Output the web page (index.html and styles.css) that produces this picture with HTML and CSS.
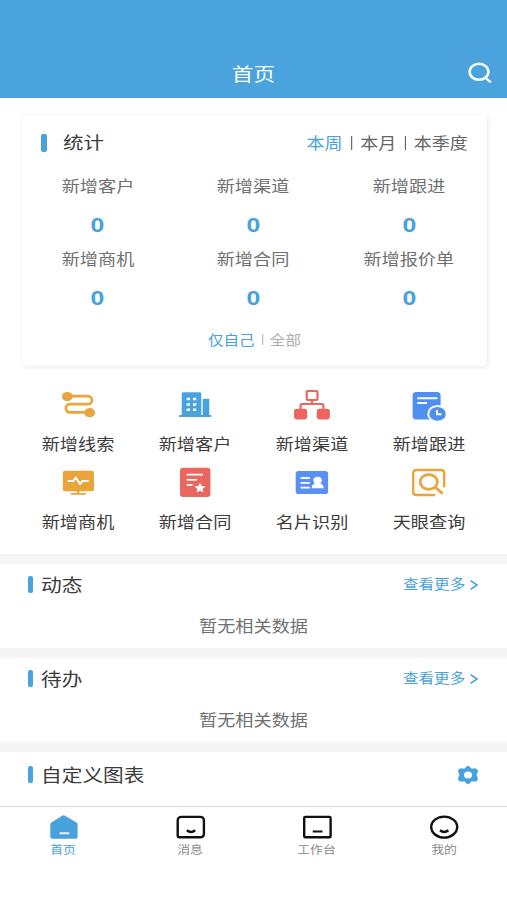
FILE: index.html
```html
<!DOCTYPE html>
<html lang="zh-CN">
<head>
<meta charset="utf-8">
<meta name="viewport" content="width=device-width, initial-scale=1">
<title>首页</title>
<link rel="stylesheet" href="styles.css">
</head>
<body>
<header class="topbar">
  <h1 class="topbar-title wide">首页</h1>
  <svg class="topbar-search" width="28" height="24" viewBox="0 0 28 24" fill="none" stroke="#fff" stroke-width="2.5"><ellipse cx="13" cy="10.8" rx="9.4" ry="8"/><path d="M20.400 17.600l4.400 3.800"/></svg>
</header>

<section class="stats">
  <div class="stats-head">
    <i class="mark"></i>
    <h2 class="stats-title wide from-left">统计</h2>
    <div class="periods wide from-right"><span class="on">本周</span><i></i><span>本月</span><i></i><span>本季度</span></div>
  </div>
  <div class="stats-grid">
    <div class="stat"><span class="wide">新增客户</span><b>0</b></div>
    <div class="stat"><span class="wide">新增渠道</span><b>0</b></div>
    <div class="stat"><span class="wide">新增跟进</span><b>0</b></div>
    <div class="stat"><span class="wide">新增商机</span><b>0</b></div>
    <div class="stat"><span class="wide">新增合同</span><b>0</b></div>
    <div class="stat"><span class="wide">新增报价单</span><b>0</b></div>
  </div>
  <div class="scope wide"><span class="on">仅自己</span><i></i><span>全部</span></div>
</section>

<nav class="actions">
  <a class="action">
    <svg width="40" height="36" viewBox="0 0 40 36"><path d="M10 9.200H30a3.900 3.900 0 0 1 0 7.900H12a4.100 4.100 0 0 0 0 8.300H30" fill="none" stroke="#e9a43c" stroke-width="2.700"/><ellipse cx="9.300" cy="9.600" rx="5.400" ry="4.600" fill="#e9a43c"/><ellipse cx="31.700" cy="25.700" rx="5.400" ry="4.600" fill="#e9a43c"/></svg>
    <span class="wide">新增线索</span>
  </a>
  <a class="action">
    <svg width="40" height="36" viewBox="0 0 40 36"><g fill="#48a2dc"><rect x="6.700" y="5.300" width="19.600" height="24" rx="1.500"/><rect x="27.700" y="11.700" width="6.600" height="17" rx="1"/><rect x="4" y="28" width="32.400" height="1.900" rx=".9"/></g><path d="M11.700 12h3.300M18 12h3.300M11.700 17.400h3.300M18 17.400h3.300M11.700 22.800h3.300M18 22.800h3.300" stroke="#fff" stroke-width="2.500"/></svg>
    <span class="wide">新增客户</span>
  </a>
  <a class="action">
    <svg width="40" height="36" viewBox="0 0 40 36"><g fill="none" stroke="#e9675f" stroke-width="2.200"><rect x="14.700" y="4" width="10.800" height="9" rx="1"/><path d="M20 13v4M8.600 22v-3.500q0-1.500 1.500-1.500h19.800q1.500 0 1.500 1.500V22"/></g><rect x="2" y="21.800" width="13.200" height="10.600" rx="2.800" fill="#e9675f"/><rect x="24.700" y="21.800" width="13.200" height="10.600" rx="2.800" fill="#e9675f"/></svg>
    <span class="wide">新增渠道</span>
  </a>
  <a class="action">
    <svg width="40" height="36" viewBox="0 0 40 36"><rect x="3.600" y="5" width="28" height="27.500" rx="3.500" fill="#508ff0"/><path d="M9 11.300h18.600M9 16h8.200" stroke="#fff" stroke-width="2" stroke-linecap="round"/><ellipse cx="28.500" cy="26.900" rx="9.300" ry="7.900" fill="#508ff0" stroke="#fff" stroke-width="2"/><path d="M28 23v4.200h4.400" fill="none" stroke="#fff" stroke-width="1.900"/></svg>
    <span class="wide">新增跟进</span>
  </a>
  <a class="action">
    <svg width="40" height="36" viewBox="0 0 40 36"><g fill="#e9a43c"><rect x="4.800" y="5.800" width="31.200" height="20.400" rx="2"/><path d="M18.800 26h2.600v2.400h-2.600z"/><rect x="12.600" y="28" width="15.400" height="1.800" rx=".9"/></g><path d="M10.500 16H15.400l2.400-3.400 4.300 6.600 2-3.200h5.800" fill="none" stroke="#fff" stroke-width="1.900" stroke-linecap="round" stroke-linejoin="round"/></svg>
    <span class="wide">新增商机</span>
  </a>
  <a class="action">
    <svg width="40" height="36" viewBox="0 0 40 36"><rect x="5" y="2.800" width="30.400" height="29.200" rx="3" fill="#e9675f"/><path d="M12.400 9.700h14.800M12.400 14.800h9M12.400 19.800h4.600" stroke="#fff" stroke-width="1.800" stroke-linecap="round"/><path d="M25 17.800l1.600 3.100 4 .5-2.900 2.400.7 3.700-3.400-1.700-3.400 1.700.7-3.700-2.900-2.400 4-.5z" fill="#fff"/></svg>
    <span class="wide">新增合同</span>
  </a>
  <a class="action">
    <svg width="40" height="36" viewBox="0 0 40 36"><rect x="3.700" y="6" width="32.400" height="23" rx="2.800" fill="#5b8ff4"/><path d="M8.600 13h9.200M8.600 17.800h9.200M8.600 22.600h9.200" stroke="#fff" stroke-width="1.800"/><path d="M25.600 11.800c2.700 0 4.200 1.500 4.200 3.400 0 1.600-.8 2.500-1.700 3.200 2.200.5 3.500 1.600 3.500 4.900H19.700c0-3.300 1.200-4.400 3.400-4.900-.9-.7-1.700-1.600-1.700-3.200 0-1.900 1.500-3.400 4.200-3.400z" fill="#fff"/></svg>
    <span class="wide">名片识别</span>
  </a>
  <a class="action">
    <svg width="40" height="36" viewBox="0 0 40 36" fill="none" stroke="#e9a43c"><path d="M35.200 22.300V8q0-3-3.400-3H7.600Q4.200 5 4.200 8V27q0 3 3.400 3H26" stroke-width="2.400"/><ellipse cx="19.800" cy="17" rx="8.600" ry="7.300" stroke-width="2.700"/><path d="M26 22l7.600 6.600" stroke-width="2.900"/></svg>
    <span class="wide">天眼查询</span>
  </a>
</nav>

<section class="panel">
  <div class="panel-head"><i class="mark"></i><h2 class="wide from-left">动态</h2><a class="more"><span class="wide from-right">查看更多</span><svg width="10" height="12" viewBox="0 0 10 12"><path d="M1.600 1.600L8 6l-6.400 4.400" fill="none" stroke="#48a2dc" stroke-width="1.600"/></svg></a></div>
  <p class="empty wide">暂无相关数据</p>
</section>
<section class="panel">
  <div class="panel-head"><i class="mark"></i><h2 class="wide from-left">待办</h2><a class="more"><span class="wide from-right">查看更多</span><svg width="10" height="12" viewBox="0 0 10 12"><path d="M1.600 1.600L8 6l-6.400 4.400" fill="none" stroke="#48a2dc" stroke-width="1.600"/></svg></a></div>
  <p class="empty wide">暂无相关数据</p>
</section>
<section class="panel panel-last">
  <div class="panel-head"><i class="mark"></i><h2 class="wide from-left">自定义图表</h2><svg class="gear" width="22" height="20" viewBox="0 0 22 20"><path d="M8.600 2.500Q11-.8 13.400 2.500L14.800 3.700 18.400 3.200Q22 4.700 20.600 7.600L19.600 10 20.600 12.400Q22 15.300 18.400 16.800L14.800 16.300 13.400 17.500Q11 20.800 8.600 17.500L7.200 16.300 3.600 16.800Q0 15.300 1.400 12.400L2.400 10 1.400 7.600Q0 4.700 3.600 3.200L7.200 3.700Z" fill="#48a2dc"/><ellipse cx="11" cy="10" rx="4" ry="3.500" fill="#fff"/></svg></div>
</section>

<footer class="tabs">
  <a class="tab active"><svg width="32" height="26" viewBox="0 0 32 26"><path d="M15.600 1.500q1-.7 2 0L29.500 8.500q1.100.7 1.100 2V23q0 1.800-1.800 1.800H5.100q-1.800 0-1.800-1.800V10.500q0-1.300 1.100-2z" fill="#48a2dc"/><path d="M12.600 19.300h9.600" stroke="#fff" stroke-width="1.800"/></svg><span class="wide">首页</span></a>
  <a class="tab"><svg width="32" height="26" viewBox="0 0 32 26" fill="none" stroke="#111" stroke-width="2.400"><path d="M7.600 2.900H26q3.900 0 3.900 3.600V19.700q0 3.600-3.900 3.600H4.900q-1.200 0-1.200-1.200V6.500q0-3.600 3.900-3.600z"/><path d="M12.800 16.300q4.200 3.400 8.400 0"/></svg><span class="wide">消息</span></a>
  <a class="tab"><svg width="32" height="26" viewBox="0 0 32 26" fill="none" stroke="#111" stroke-width="2.400"><rect x="3.200" y="2.900" width="26.400" height="20.400" rx="1"/><path d="M11.700 17.500h9.800" stroke-width="2"/></svg><span class="wide">工作台</span></a>
  <a class="tab"><svg width="32" height="26" viewBox="0 0 32 26" fill="none" stroke="#111" stroke-width="2.400"><ellipse cx="16.200" cy="13.100" rx="13" ry="10.500"/><path d="M12 16.300q4.200 3.400 8.400 0"/></svg><span class="wide">我的</span></a>
</footer>
</body>
</html>
```
FILE: styles.css
```css
* { box-sizing: border-box; }

:root {
  --blue: #48a2dc;
  --stretch: 1.17;
}

body {
  margin: 0;
  height: 900px;
  overflow: hidden;
  background: #fff;
  color: #3c3c3c;
  font-family: "Noto Sans CJK SC", "Noto Sans", sans-serif;
}

h1, h2, p { margin: 0; font-weight: 400; }
svg { display: block; flex: none; }

/* Expanded letterforms, anchored on the side the text aligns to */
.wide { display: block; white-space: nowrap; transform: scaleX(var(--stretch)); }
.from-left { transform-origin: left center; }
.from-right { transform-origin: right center; }
.on { color: var(--blue); }

.mark { flex: none; width: 5px; height: 17px; border-radius: 2px; background: var(--blue); }

.topbar {
  display: grid;
  grid-template-columns: 1fr auto 1fr;
  align-items: center;
  height: 98px;
  padding: 50px 13px 2px 13px;
  background: #4aa3dc;
  color: #fff;
}
.topbar-title { grid-column: 2; font-size: 18.4px; line-height: 28px; }
.topbar-search { justify-self: end; }

.stats {
  height: 251px;
  margin: 17px 20px 0 22px;
  padding-top: 14px;
  border-radius: 4px;
  box-shadow: 1px 1px 5px rgba(0, 0, 0, .09);
}
.stats-head { display: flex; align-items: center; height: 27px; padding: 0 19px; }
.stats-head .mark { width: 6px; height: 18px; }
.stats-title { margin: -1px 0 1px 16px; font-size: 17.5px; line-height: 27px; }
.periods { display: flex; align-items: center; margin-left: auto; font-size: 15.4px; line-height: 27px; color: #666; }
.periods .on { color: var(--blue); }
.periods i { width: 1px; height: 14px; margin: 0 7px; background: #666; }

.stats-grid {
  display: grid;
  grid-template-columns: repeat(3, 1fr);
  grid-auto-rows: 72.5px;
  margin: 16px 0 0 -2px;
}
.stat { display: flex; flex-direction: column; align-items: center; }
.stat span { font-size: 15.5px; line-height: 26px; color: #707070; }
.stat b {
  margin-top: 14px;
  font-family: "Liberation Sans", sans-serif;
  font-size: 19.5px;
  line-height: 26px;
  color: var(--blue);
  transform: scaleX(1.27);
}
.scope {
  display: flex;
  align-items: center;
  justify-content: center;
  height: 24px;
  margin-top: 10px;
  font-size: 13.3px;
  color: #adadad;
}
.scope i { width: 1px; height: 11px; margin: 0 6px; background: #bbb; }

.actions {
  display: grid;
  grid-template-columns: repeat(4, 117px);
  grid-auto-rows: 78px;
  margin: 21px 0 0 19.5px;
}
.action { display: flex; flex-direction: column; align-items: center; }
.action span { margin-top: 7px; font-size: 15.5px; line-height: 26px; }

.panel { height: 94px; border-top: 10px solid #f5f5f5; }
.actions + .panel { margin-top: 11px; }
.panel-head { display: flex; align-items: center; height: 41px; padding: 0 28px; }
.panel-head h2 { margin: -2px 0 0 8px; font-size: 17.7px; line-height: 28px; }
.more { display: flex; align-items: center; gap: 4px; margin-left: auto; color: var(--blue); font-size: 13.3px; line-height: 24px; }
.more span { margin-top: -2px; }
.empty { width: fit-content; margin: 8px auto 0; font-size: 15.5px; line-height: 24px; color: #707070; }
.panel-last { height: 64px; }
.panel-last .panel-head { height: 45px; }
.gear { margin-left: auto; }

.tabs { display: grid; grid-template-columns: repeat(4, 1fr); border-top: 1px solid #d8d8d8; padding-top: 7px; }
.tab { display: flex; flex-direction: column; align-items: center; color: #8c8c8c; }
.tab span { font-size: 11px; line-height: 18px; }
.tab.active { color: var(--blue); }
```
